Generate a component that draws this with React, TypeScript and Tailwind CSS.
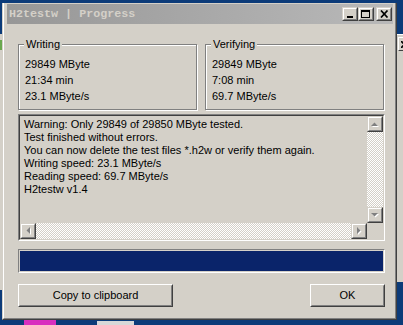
import React from "react";

type Kids = { className?: string; children?: React.ReactNode };

function ScrollBtn({ className = "", children }: Kids) {
  return (
    <div className={`border border-t-[#d4d0c8] border-l-[#d4d0c8] border-b-[#404040] border-r-[#404040] bg-[#d4d0c8] ${className}`}>
      <div className="w-full h-full border border-t-white border-l-white border-b-[#808080] border-r-[#808080] flex items-center justify-center">
        {children}
      </div>
    </div>
  );
}

function PushBtn({ className = "", children }: Kids) {
  return (
    <div className={`border border-t-white border-l-white border-b-[#404040] border-r-[#404040] bg-[#d4d0c8] ${className}`}>
      <div className="w-full h-full border border-t-[#d4d0c8] border-l-[#d4d0c8] border-b-[#808080] border-r-[#808080] flex items-center justify-center text-[11px] leading-[13px] text-black">
        {children}
      </div>
    </div>
  );
}

function Arrow({ dir }: { dir: "up" | "down" | "left" | "right" }) {
  const pts: Record<string, string> = {
    up: "0,4 3.5,0.5 7,4",
    down: "0,0 7,0 3.5,3.5",
    left: "4,0 4,7 0.5,3.5",
    right: "0,0 0,7 3.5,3.5",
  };
  const vertical = dir === "up" || dir === "down";
  const w = vertical ? 8 : 5;
  const h = vertical ? 5 : 8;
  return (
    <svg width={w} height={h} viewBox={`0 0 ${w} ${h}`} className="block">
      <polygon points={pts[dir]} fill="#ffffff" transform="translate(1,1)" />
      <polygon points={pts[dir]} fill="#808080" />
    </svg>
  );
}

const checker =
  "bg-[repeating-conic-gradient(#ffffff_0%_25%,#d4d0c8_0%_50%)] bg-[length:2px_2px]";

function Group({ title, lines }: { title: string; lines: string[] }) {
  return (
    <fieldset className="w-[179px] h-[72px] border border-[#808080] shadow-[inset_1px_1px_0_#ffffff,1px_1px_0_#ffffff] pl-[6px] pt-[5px] m-0">
      <legend className="px-[2px] ml-[-1px] text-[11px] leading-[13px] text-black bg-[#d4d0c8]">{title}</legend>
      <div className="flex flex-col text-[11px] leading-[16px] text-black">
        {lines.map((l) => (
          <div key={l}>{l}</div>
        ))}
      </div>
    </fieldset>
  );
}

export default function App() {
  const logLines = [
    "Warning: Only 29849 of 29850 MByte tested.",
    "Test finished without errors.",
    "You can now delete the test files *.h2w or verify them again.",
    "Writing speed: 23.1 MByte/s",
    "Reading speed: 69.7 MByte/s",
    "H2testw v1.4",
  ];
  return (
    <div className="relative w-[403px] h-[325px] overflow-hidden bg-[#0c3b79] font-['Liberation_Sans',Arial,sans-serif]">
      {/* background windows / desktop bits */}
      <div className="absolute left-0 top-[34px] w-[3px] h-[256px] bg-[#d4d0c8]" />
      <div className="absolute left-0 top-[40px] w-[2px] h-[10px] bg-[#6aa84f]" />
      <div className="absolute left-[397px] top-[34px] w-[10px] h-[248px] bg-[#d4d0c8] border-t border-t-white" />
      <div className="absolute left-[398px] top-[37px] w-[16px] h-[14px] border border-t-white border-l-white border-b-[#404040] border-r-[#404040] flex items-center">
        <svg width="8" height="7" viewBox="0 0 8 7" className="ml-[2px]">
          <path d="M0 0 L7 7 M7 0 L0 7" stroke="#000" strokeWidth="1.6" />
        </svg>
      </div>
      <div className="absolute left-[24px] top-[320px] w-[32px] h-[6px] bg-[#d82fbf]" />
      <div className="absolute left-[97px] top-[321px] w-[37px] h-[5px] bg-[#d8d8d8]" />

      {/* main window */}
      <div className="absolute left-[2px] top-[3px] w-[395px] h-[317px] bg-[#d4d0c8] border-l border-r border-b border-l-[#d4d0c8] border-r-[#404040] border-b-[#404040]">
        <div className="w-full h-full border-l border-r border-b border-l-white border-r-[#808080] border-b-[#808080] pt-px pl-[3px] pr-[2px] flex flex-col">
          {/* title bar */}
          <div className="h-[20px] flex items-center bg-gradient-to-r from-[#979797] to-[#b9b9b9] pl-[2px] pr-[1px]">
            <span className="font-['Liberation_Mono',monospace] font-bold text-[11.7px] leading-[14px] text-[#d4d0c8] whitespace-pre">
              H2testw | Progress
            </span>
            <div className="ml-auto flex items-center">
              <ScrollBtn className="w-[16px] h-[14px]">
                <svg width="10" height="8" viewBox="0 0 10 8" className="block">
                  <rect x="2" y="6" width="6" height="2" fill="#000" />
                </svg>
              </ScrollBtn>
              <ScrollBtn className="w-[16px] h-[14px]">
                <svg width="10" height="9" viewBox="0 0 10 9" className="block">
                  <rect x="0.5" y="0.5" width="8" height="7" fill="none" stroke="#000" />
                  <rect x="0" y="0" width="9" height="2" fill="#000" />
                </svg>
              </ScrollBtn>
              <ScrollBtn className="w-[16px] h-[14px] ml-[2px]">
                <svg width="9" height="8" viewBox="0 0 9 8" className="block">
                  <path d="M1 0.5 L7.5 7.5 M7.5 0.5 L1 7.5" stroke="#000" strokeWidth="1.7" />
                </svg>
              </ScrollBtn>
            </div>
          </div>

          {/* client */}
          <div className="pl-[11px] pr-[8px] pt-[14px] flex flex-col">
            <div className="flex gap-[8px]">
              <Group title="Writing" lines={["29849 MByte", "21:34 min", "23.1 MByte/s"]} />
              <Group title="Verifying" lines={["29849 MByte", "7:08 min", "69.7 MByte/s"]} />
            </div>

            {/* log text area */}
            <div className="mt-[4px] h-[127px] border border-t-[#808080] border-l-[#808080] border-b-white border-r-white">
              <div className="w-full h-full border border-t-[#404040] border-l-[#404040] border-b-[#d4d0c8] border-r-[#d4d0c8] grid grid-cols-[1fr_16px] grid-rows-[1fr_16px]">
                <div className="pl-[4px] pt-[2px] text-[11px] leading-[13px] text-black overflow-hidden whitespace-nowrap">
                  {logLines.map((l) => (
                    <div key={l}>{l}</div>
                  ))}
                </div>
                <div className={`flex flex-col ${checker}`}>
                  <ScrollBtn className="w-[16px] h-[16px]">
                    <Arrow dir="up" />
                  </ScrollBtn>
                  <div className="flex-1" />
                  <ScrollBtn className="w-[16px] h-[16px]">
                    <Arrow dir="down" />
                  </ScrollBtn>
                </div>
                <div className={`flex ${checker}`}>
                  <ScrollBtn className="w-[16px] h-[16px]">
                    <Arrow dir="left" />
                  </ScrollBtn>
                  <div className="flex-1" />
                  <ScrollBtn className="w-[16px] h-[16px]">
                    <Arrow dir="right" />
                  </ScrollBtn>
                </div>
                <div className="bg-[#d4d0c8]" />
              </div>
            </div>

            {/* progress bar */}
            <div className="mt-[8px] h-[24px] border border-t-[#808080] border-l-[#808080] border-b-white border-r-white p-px">
              <div className="w-full h-full bg-[#0a246a]" />
            </div>

            {/* buttons */}
            <div className="mt-[11px] flex justify-between">
              <PushBtn className="w-[155px] h-[23px]">Copy to clipboard</PushBtn>
              <PushBtn className="w-[75px] h-[23px]">OK</PushBtn>
            </div>
          </div>
        </div>
      </div>
    </div>
  );
}
